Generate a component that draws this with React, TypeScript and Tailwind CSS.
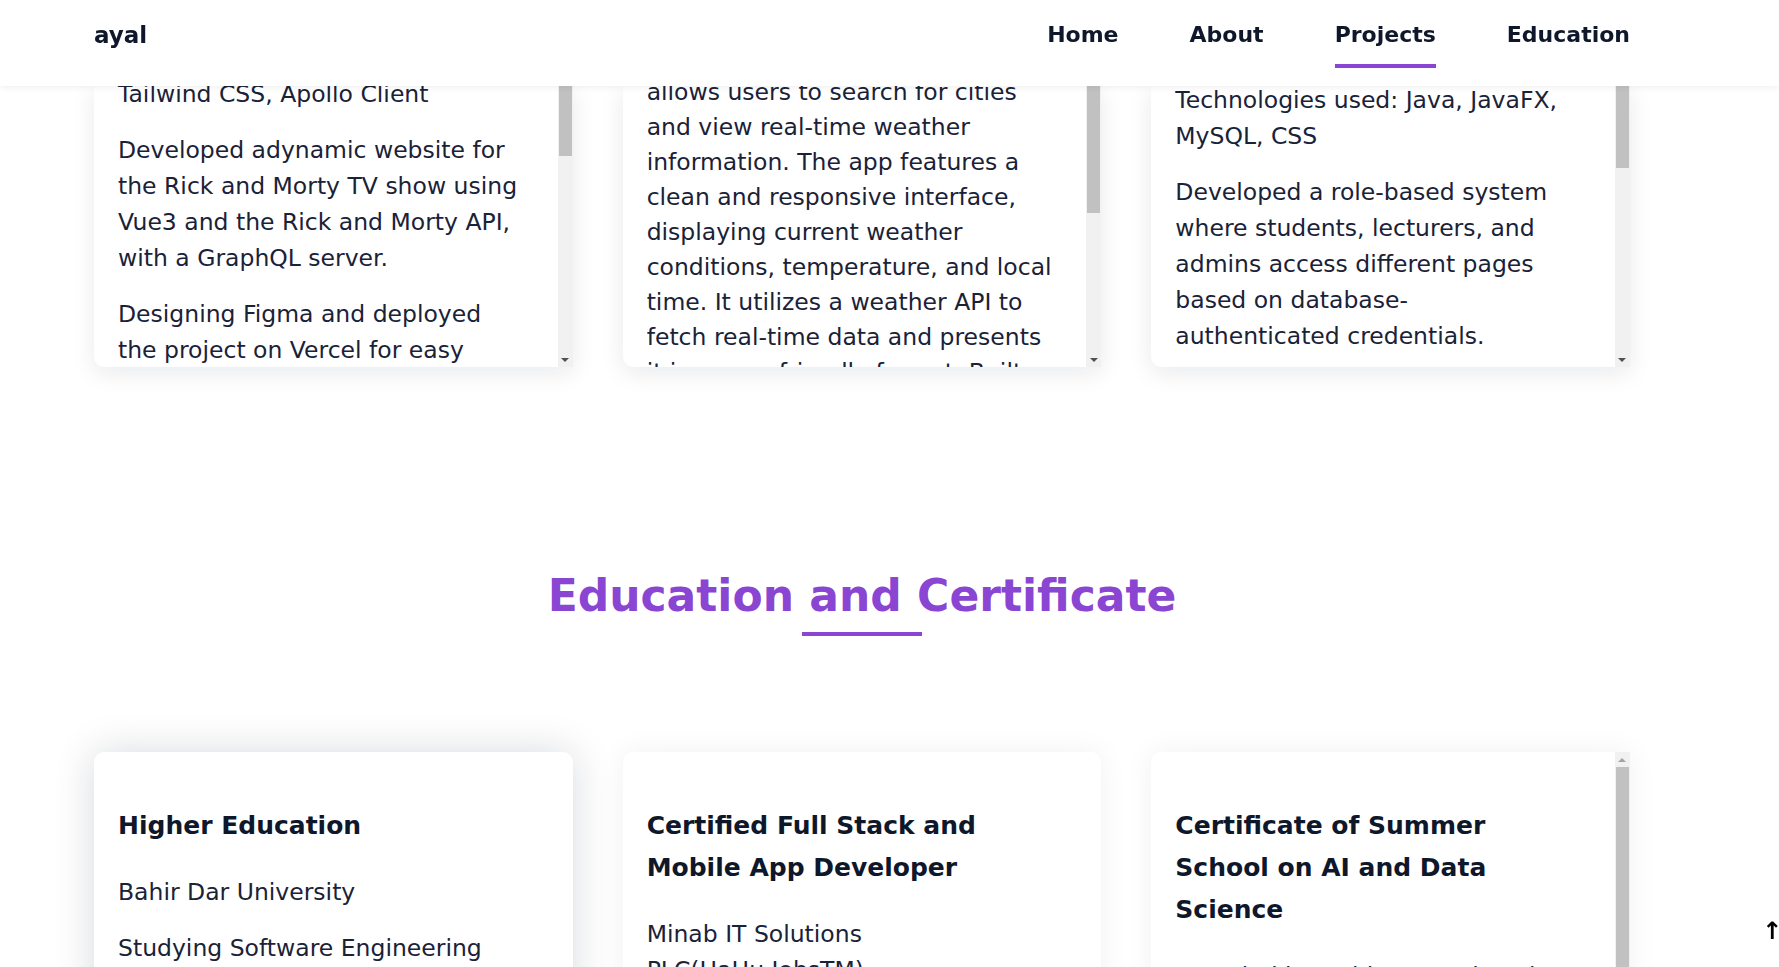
type Card = {
  paras: string[][];
  offset: string;
  thumb: number;
  leading: string;
};

// the project cards are scrolled part way; only the lines in view are listed
const projects: Card[] = [
  {
    paras: [
      ["Tailwind CSS, Apollo Client"],
      [
        "Developed adynamic website for",
        "the Rick and Morty TV show using",
        "Vue3 and the Rick and Morty API,",
        "with a GraphQL server.",
      ],
      ["Designing Figma and deployed", "the project on Vercel for easy"],
    ],
    offset: "-mt-[10px]",
    thumb: 70,
    leading: "leading-[36px]",
  },
  {
    paras: [
      [
        "allows users to search for cities",
        "and view real-time weather",
        "information. The app features a",
        "clean and responsive interface,",
        "displaying current weather",
        "conditions, temperature, and local",
        "time. It utilizes a weather API to",
        "fetch real-time data and presents",
        "it in a user-friendly format. Built",
      ],
    ],
    offset: "-mt-[11px]",
    thumb: 127,
    leading: "leading-[35px]",
  },
  {
    paras: [
      ["Technologies used: Java, JavaFX,", "MySQL, CSS"],
      [
        "Developed a role-based system",
        "where students, lecturers, and",
        "admins access different pages",
        "based on database-",
        "authenticated credentials.",
      ],
    ],
    offset: "-mt-[4px]",
    thumb: 82,
    leading: "leading-[36px]",
  },
];

const education = [
  {
    title: ["Higher Education"],
    paras: [["Bahir Dar University"], ["Studying Software Engineering"]],
    shadow: "shadow-[0_0_40px_rgba(15,23,42,0.16)]",
    bar: false,
  },
  {
    title: ["Certified Full Stack and", "Mobile App Developer"],
    paras: [["Minab IT Solutions", "PLC(HaHu JobsTM)"]],
    shadow: "shadow-[0_0_30px_rgba(15,23,42,0.06)]",
    bar: false,
  },
  {
    title: ["Certificate of Summer", "School on AI and Data", "Science"],
    paras: [["Awarded by Bahir Dar University"]],
    shadow: "shadow-[0_0_30px_rgba(15,23,42,0.06)]",
    bar: true,
  },
];

function Lines({ lines }: { lines: string[] }) {
  return (
    <>
      {lines.map((l, i) => (
        <span key={i} className="block">
          {l}
        </span>
      ))}
    </>
  );
}

// classic scrollbar look, drawn over the card's right edge
function Scrollbar({ up, down, thumb }: { up?: boolean; down?: boolean; thumb: number }) {
  return (
    <div className="absolute top-0 right-0 bottom-0 flex w-[15px] flex-col bg-[#f1f1f1]">
      {up && (
        <div className="flex h-[15px] shrink-0 items-center justify-center">
          <span className="h-0 w-0 border-x-[4px] border-b-[4px] border-x-transparent border-b-[#a3a3a3]" />
        </div>
      )}
      <div className="flex-1 overflow-hidden">
        <div className="mx-[1px] bg-[#c1c1c1]" style={{ height: thumb }} />
      </div>
      {down && (
        <div className="flex h-[15px] shrink-0 items-center justify-center">
          <span className="h-0 w-0 border-x-[4px] border-t-[4px] border-x-transparent border-t-[#505050]" />
        </div>
      )}
    </div>
  );
}

function ProjectCard({ card }: { card: Card }) {
  return (
    <div className="relative h-[281px] rounded-bl-[10px] bg-white shadow-[0_6px_24px_rgba(15,23,42,0.09)]">
      <div className="h-full overflow-hidden rounded-bl-[10px] pl-6 pr-[39px]">
        {card.paras.map((p, i) => (
          <p
            key={i}
            className={`whitespace-nowrap text-[23.5px] text-[#1a2238] ${card.leading} ${i === 0 ? card.offset : "mt-5"}`}
          >
            <Lines lines={p} />
          </p>
        ))}
      </div>
      <Scrollbar down thumb={card.thumb} />
    </div>
  );
}

export default function App() {
  return (
    <div className="relative h-[967px] overflow-hidden bg-white font-['DejaVu_Sans',sans-serif]">
      <header className="fixed inset-x-0 top-0 z-10 h-[86px] bg-white shadow-[0_2px_6px_rgba(15,23,42,0.06)]">
        <div className="ml-[94px] flex w-[1536px] items-start justify-between">
          <a className="pt-[22px] text-[23px] font-bold leading-[26px] text-[#0f172a]">ayal</a>
          <nav className="flex gap-[71px]">
            {["Home", "About", "Projects", "Education"].map((n) => (
              <a key={n} className="flex flex-col pt-[22px] text-[22px] font-bold leading-[26px] text-[#0f172a]">
                <span>{n}</span>
                {n === "Projects" && <span className="mt-4 h-1 w-full bg-[#8a45d2]" />}
              </a>
            ))}
          </nav>
        </div>
      </header>

      <main className="ml-[94px] w-[1536px] pt-[86px]">
        <section className="grid grid-cols-3 gap-[50px]">
          {projects.map((c, i) => (
            <ProjectCard key={i} card={c} />
          ))}
        </section>

        <section className="mt-[207px]">
          <h2 className="text-center text-[44px] font-bold leading-[44px] text-[#8a45d2]">
            Education and Certificate
          </h2>
          <div className="mx-auto mt-[14px] h-1 w-[120px] bg-[#8a45d2]" />

          <div className="mt-[116px] grid grid-cols-3 gap-[50px]">
            {education.map((c, i) => (
              <div
                key={i}
                className={`relative h-[440px] overflow-hidden bg-white ${c.bar ? "rounded-l-[10px]" : "rounded-[10px]"} ${c.shadow}`}
              >
                <div className="px-6 pt-[53px] pb-6">
                  <h3 className="whitespace-nowrap text-[25px] font-bold leading-[42px] text-[#0f172a]">
                    <Lines lines={c.title} />
                  </h3>
                  {c.paras.map((p, j) => (
                    <p
                      key={j}
                      className={`whitespace-nowrap text-[23.5px] leading-[36px] text-[#1a2238] ${j === 0 ? "mt-[27px]" : "mt-5"}`}
                    >
                      <Lines lines={p} />
                    </p>
                  ))}
                </div>
                {c.bar && <Scrollbar up thumb={330} />}
              </div>
            ))}
          </div>
        </section>
      </main>

      <button className="fixed right-[-3px] bottom-[24px] text-[24px] font-bold leading-none text-black">↑</button>
    </div>
  );
}
